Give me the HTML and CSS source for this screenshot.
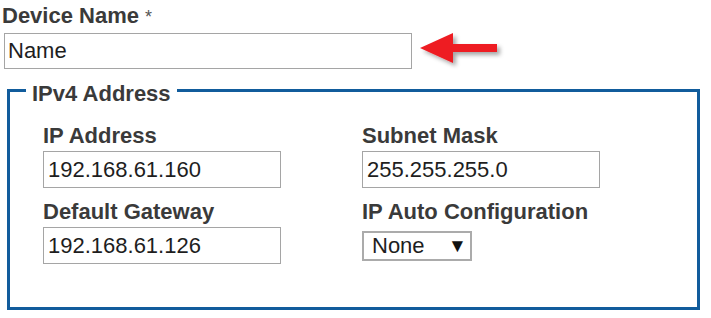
FILE: index.html
```
<!DOCTYPE html>
<html>
<head>
<meta charset="utf-8">
<link rel="stylesheet" href="styles.css">
</head>
<body>
<div class="page">
  <label class="label top-label" for="devname">Device Name <span class="req">*</span></label>
  <div class="name-row">
    <input id="devname" class="text-input name-input" type="text" value="Name">
    <svg class="arrow" width="95" height="36" viewBox="0 0 95 36" aria-hidden="true">
      <defs>
        <filter id="sh" x="-20%" y="-30%" width="150%" height="180%">
          <feDropShadow dx="3" dy="3" stdDeviation="2" flood-color="#000" flood-opacity="0.35"/>
        </filter>
      </defs>
      <polygon points="4,15 37,0 37,11 81,11 81,19 37,19 37,30" fill="#ee1c23" filter="url(#sh)"/>
    </svg>
  </div>
  <fieldset class="ipv4">
    <legend class="legend">IPv4 Address</legend>
    <div class="grid">
      <div class="field">
        <label class="label">IP Address</label>
        <input class="text-input" type="text" value="192.168.61.160">
      </div>
      <div class="field">
        <label class="label">Subnet Mask</label>
        <input class="text-input" type="text" value="255.255.255.0">
      </div>
      <div class="field">
        <label class="label">Default Gateway</label>
        <input class="text-input" type="text" value="192.168.61.126">
      </div>
      <div class="field">
        <label class="label">IP Auto Configuration</label>
        <div class="select"><span class="sel-val">None</span><span class="sel-arrow">▼</span></div>
      </div>
    </div>
  </fieldset>
</div>
</body>
</html>
```
FILE: styles.css
```
html, body {
  margin: 0;
  padding: 0;
  background: #fff;
}
body {
  font-family: "Liberation Sans", Arial, sans-serif;
  font-size: 22px;
  color: #333;
}
.page {
  padding: 4px 0 0 0;
  width: 711px;
}
.label {
  display: block;
  font-weight: bold;
  font-size: 22px;
  line-height: 24px;
  color: #3a3a3a;
}
.top-label {
  padding-left: 2px;
  height: 24px;
}
.req {
  font-weight: normal;
  font-size: 18px;
  color: #555;
  vertical-align: top;
  position: relative;
  top: 1px;
}
.name-row {
  display: flex;
  align-items: flex-start;
  margin-top: 5px;
  padding-left: 4px;
}
.text-input {
  display: block;
  box-sizing: border-box;
  font-family: "Liberation Sans", Arial, sans-serif;
  font-size: 22px;
  color: #1e1e1e;
  border: 1px solid #a5a5a5;
  background: #fff;
  padding: 0 4px;
  margin: 3px 0 0 0;
  height: 37px;
  width: 238px;
  outline: none;
}
.name-input {
  width: 408px;
  height: 36px;
  margin: 0;
  padding: 0 3px;
}
.arrow {
  margin-left: 4px;
  overflow: visible;
  flex: none;
}
.ipv4 {
  box-sizing: border-box;
  width: 693px;
  margin: 5px 0 0 7px;
  padding: 18px 0 43px 33px;
  border: 3px solid #115c9c;
  min-width: 0;
}
.legend {
  font-weight: bold;
  font-size: 22px;
  line-height: 24px;
  color: #3a3a3a;
  padding: 8px 6px 0 6px;
  margin-left: -17px;
}
.grid {
  display: grid;
  grid-template-columns: 238px 238px;
  column-gap: 81px;
  row-gap: 12px;
}
.select {
  box-sizing: border-box;
  display: flex;
  align-items: center;
  width: 110px;
  height: 30px;
  margin-top: 7px;
  border: 2px solid #ababab;
  background: #fff;
  padding-left: 8px;
  font-size: 22px;
  color: #1e1e1e;
}
.sel-val {
  width: 76px;
}
.sel-arrow {
  font-size: 19px;
  color: #111;
}
```
